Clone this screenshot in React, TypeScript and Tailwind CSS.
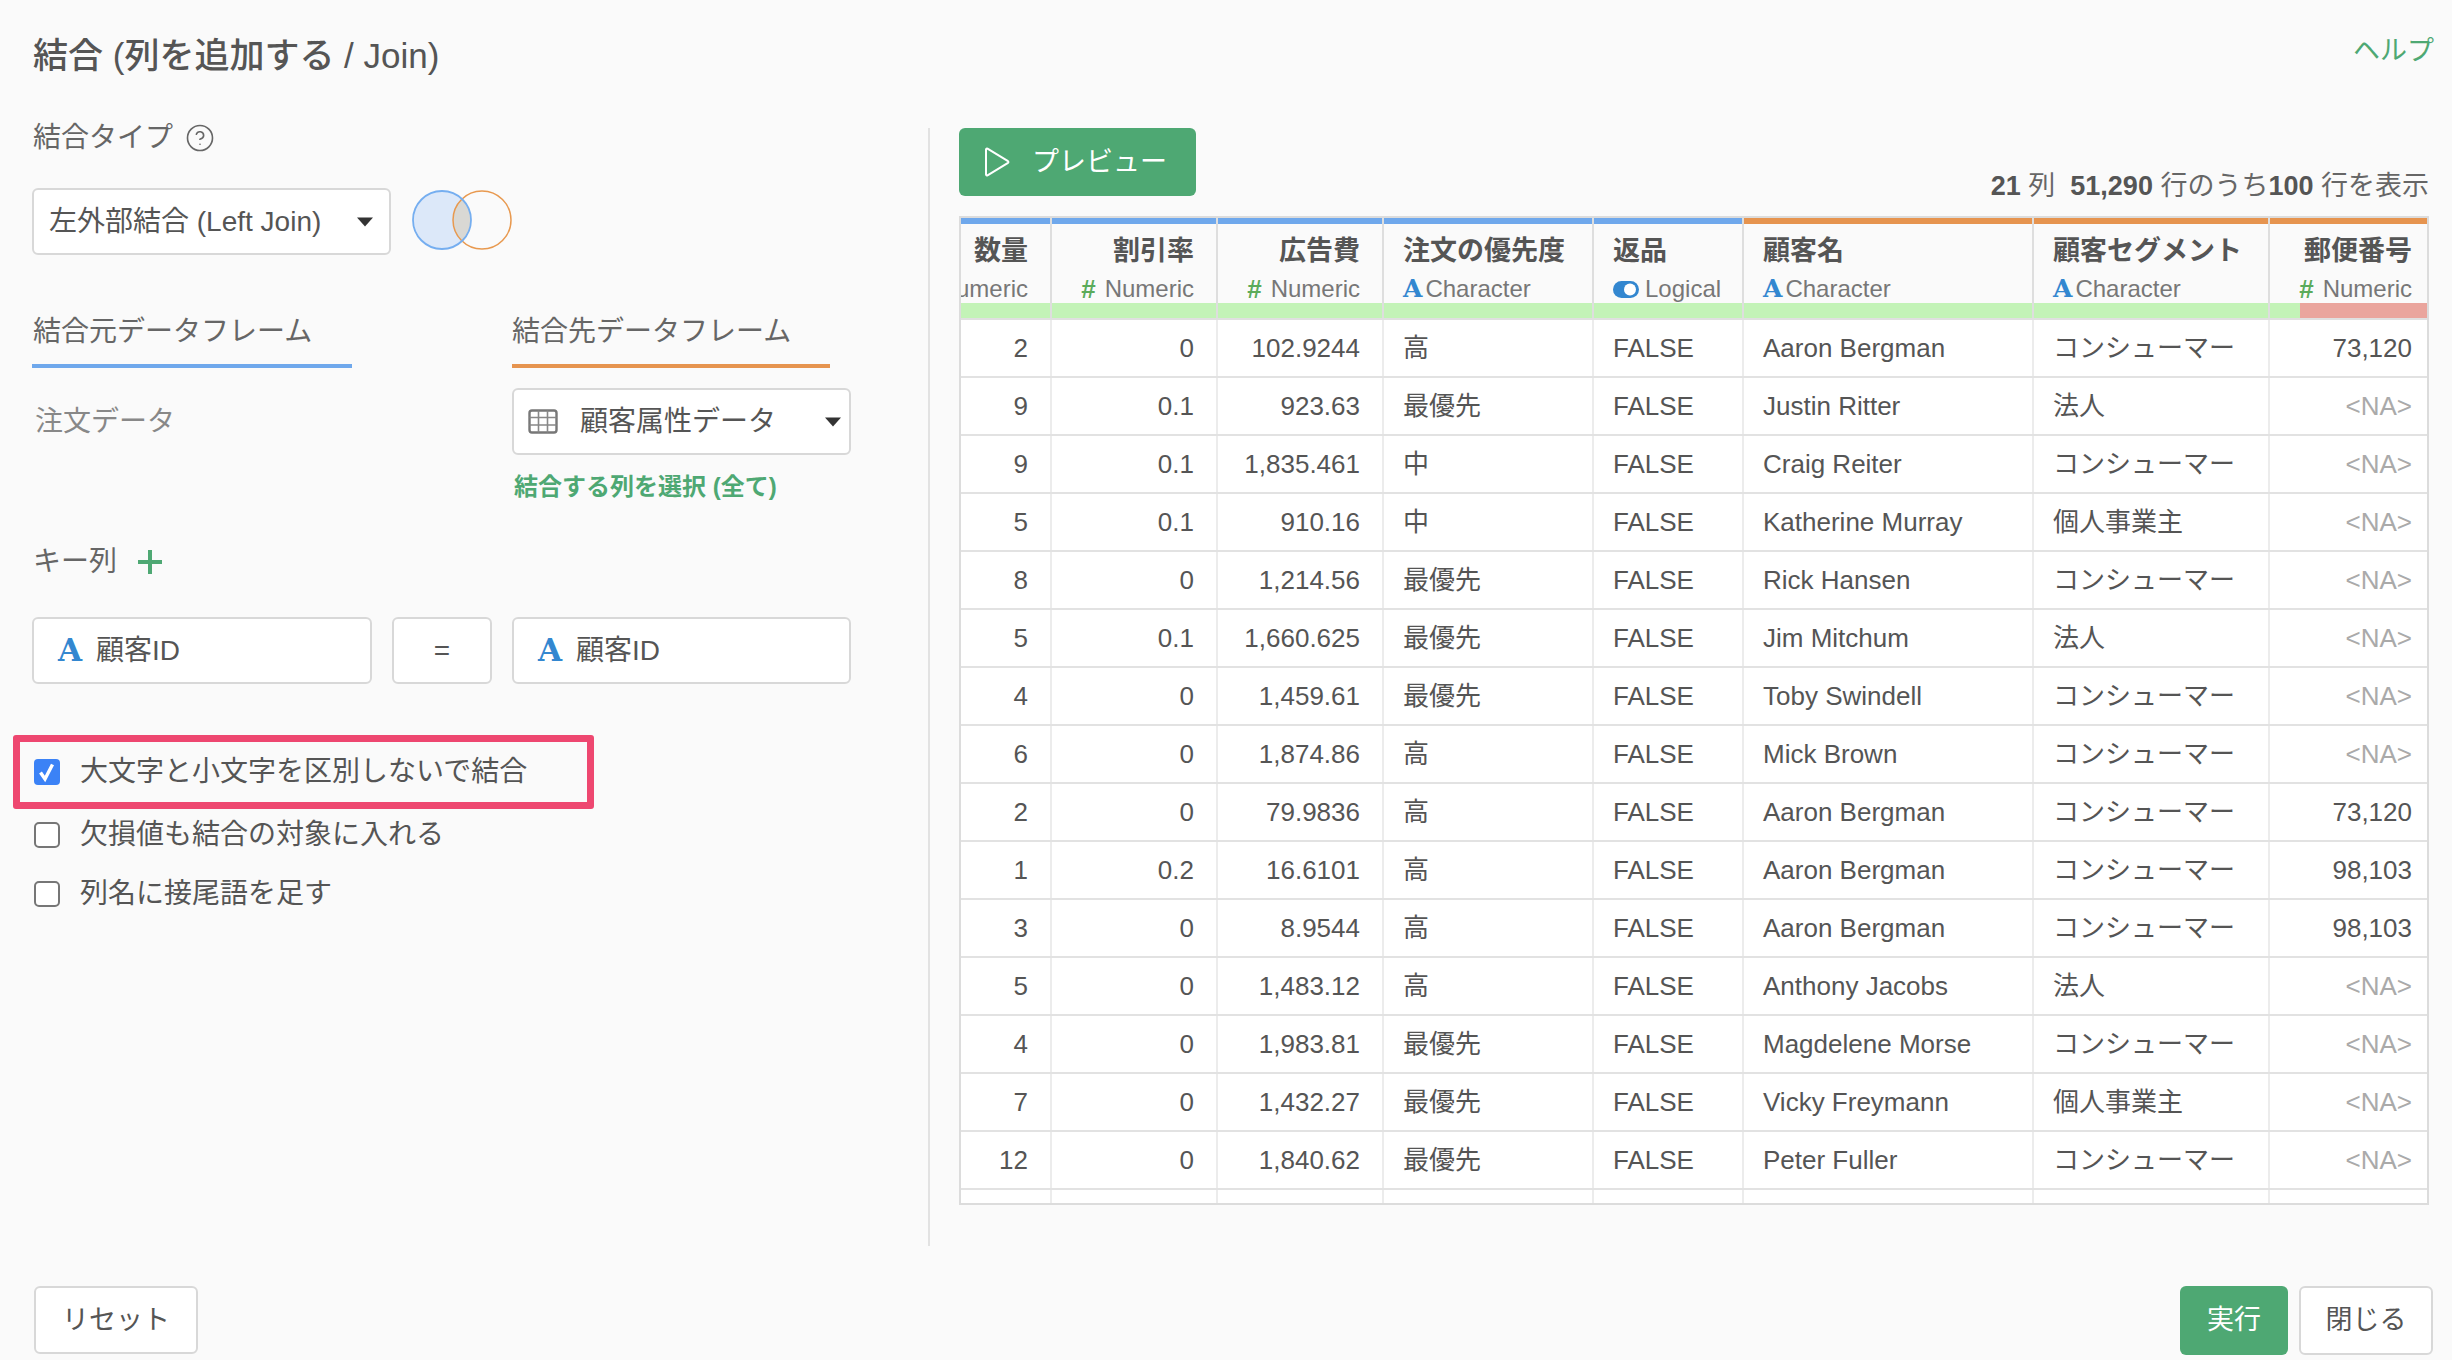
import { CircleHelp } from "lucide-react";

const columns = [
  { name: "数量", type: "num", right: true, top: "bg-[#6fa8ec]", w: "w-[91px]" },
  { name: "割引率", type: "num", right: true, top: "bg-[#6fa8ec]", w: "w-[166px]" },
  { name: "広告費", type: "num", right: true, top: "bg-[#6fa8ec]", w: "w-[166px]" },
  { name: "注文の優先度", type: "chr", right: false, top: "bg-[#6fa8ec]", w: "w-[210px]" },
  { name: "返品", type: "lgl", right: false, top: "bg-[#6fa8ec]", w: "w-[150px]" },
  { name: "顧客名", type: "chr", right: false, top: "bg-[#e6944f]", w: "w-[290px]" },
  { name: "顧客セグメント", type: "chr", right: false, top: "bg-[#e6944f]", w: "w-[236px]" },
  { name: "郵便番号", type: "num", right: true, top: "bg-[#e6944f]", w: "w-[157px]" },
];

const rows = [
  ["2", "0", "102.9244", "高", "FALSE", "Aaron Bergman", "コンシューマー", "73,120"],
  ["9", "0.1", "923.63", "最優先", "FALSE", "Justin Ritter", "法人", "<NA>"],
  ["9", "0.1", "1,835.461", "中", "FALSE", "Craig Reiter", "コンシューマー", "<NA>"],
  ["5", "0.1", "910.16", "中", "FALSE", "Katherine Murray", "個人事業主", "<NA>"],
  ["8", "0", "1,214.56", "最優先", "FALSE", "Rick Hansen", "コンシューマー", "<NA>"],
  ["5", "0.1", "1,660.625", "最優先", "FALSE", "Jim Mitchum", "法人", "<NA>"],
  ["4", "0", "1,459.61", "最優先", "FALSE", "Toby Swindell", "コンシューマー", "<NA>"],
  ["6", "0", "1,874.86", "高", "FALSE", "Mick Brown", "コンシューマー", "<NA>"],
  ["2", "0", "79.9836", "高", "FALSE", "Aaron Bergman", "コンシューマー", "73,120"],
  ["1", "0.2", "16.6101", "高", "FALSE", "Aaron Bergman", "コンシューマー", "98,103"],
  ["3", "0", "8.9544", "高", "FALSE", "Aaron Bergman", "コンシューマー", "98,103"],
  ["5", "0", "1,483.12", "高", "FALSE", "Anthony Jacobs", "法人", "<NA>"],
  ["4", "0", "1,983.81", "最優先", "FALSE", "Magdelene Morse", "コンシューマー", "<NA>"],
  ["7", "0", "1,432.27", "最優先", "FALSE", "Vicky Freymann", "個人事業主", "<NA>"],
  ["12", "0", "1,840.62", "最優先", "FALSE", "Peter Fuller", "コンシューマー", "<NA>"],
  ["1", "0", "1,120.5", "最優先", "FALSE", "Ben Peterman", "法人", "<NA>"],
];

function Caret() {
  return (
    <svg width="16" height="10" viewBox="0 0 16 10" className="shrink-0">
      <path d="M0 0.5h16l-8 9z" fill="#333" />
    </svg>
  );
}

function CharIcon({ className }: { className: string }) {
  return <span className={"shrink-0 [font-family:'DejaVu_Serif',serif] font-bold text-[#3387d0] " + className}>A</span>;
}

function TypeIcon({ type }: { type: string }) {
  if (type === "num") return <span className="shrink-0 font-bold text-[#5bab5b] text-[26px] mr-[9px]">#</span>;
  if (type === "chr") return <CharIcon className="text-[25px] mr-[3px]" />;
  return (
    <svg width="26" height="17" viewBox="0 0 26 17" className="shrink-0 mr-[6px]">
      <rect width="26" height="17" rx="8.5" fill="#3387d0" />
      <circle cx="17" cy="8.5" r="6" fill="#fff" />
    </svg>
  );
}

function Check({ checked, label }: { checked?: boolean; label: string }) {
  return (
    <label className="flex items-center gap-[20px] h-[40px] text-[28px] text-[#555] whitespace-nowrap">
      {checked ? (
        <span className="w-[26px] h-[26px] rounded-[4px] bg-[#3b82f6] flex items-center justify-center shrink-0">
          <svg width="20" height="22" viewBox="0 0 20 22">
            <path d="M3.5 11.5l4.5 6.5L15.5 3.5" fill="none" stroke="#fff" strokeWidth="3.4" />
          </svg>
        </span>
      ) : (
        <span className="w-[26px] h-[26px] rounded-[5px] border-2 border-[#767676] bg-white shrink-0" />
      )}
      {label}
    </label>
  );
}

function KeyBox({ className }: { className: string }) {
  return (
    <div className={"h-[67px] border-2 border-[#d8d8d8] rounded-[6px] bg-white flex items-center pl-[24px] text-[28px] text-[#555] " + className}>
      <CharIcon className="text-[31px] mr-[14px]" />
      顧客ID
    </div>
  );
}

export default function App() {
  return (
    <div className="w-[2452px] h-[1360px] overflow-hidden flex flex-col bg-[#fafafa] text-[#555] [font-family:'Liberation_Sans','Noto_Sans_CJK_JP',sans-serif]">
      {/* Header */}
      <div className="h-[118px] shrink-0 flex justify-between pl-[33px] pr-[18px]">
        <h1 className="text-[35px] leading-[48px] mt-[32px] font-medium text-[#555] whitespace-nowrap">結合 (列を追加する / Join)</h1>
        <a className="text-[27px] leading-[36px] mt-[33px] text-[#4ea873]">ヘルプ</a>
      </div>

      <div className="h-[1128px] shrink-0 flex">
        {/* Left panel */}
        <div className="w-[896px] ml-[32px] shrink-0">
          <div className="flex items-center h-[40px] text-[28px] text-[#666] pl-[1px] gap-[12px]">
            結合タイプ
            <CircleHelp size={30} strokeWidth={1.3} color="#666" />
          </div>

          <div className="mt-[30px] flex items-center gap-[21px]">
            <div className="w-[359px] h-[67px] border-2 border-[#d8d8d8] rounded-[6px] bg-white flex items-center justify-between pl-[15px] pr-[16px] text-[28px] text-[#555] whitespace-nowrap">
              左外部結合 (Left Join)
              <Caret />
            </div>
            <svg width="100" height="62" viewBox="0 0 100 62" className="-mt-[4px]">
              <defs>
                <clipPath id="venn-left">
                  <circle cx="30" cy="31" r="29" />
                </clipPath>
              </defs>
              <circle cx="30" cy="31" r="29" fill="#dce8f9" />
              <circle cx="70" cy="31" r="29" fill="#d9d8d4" clipPath="url(#venn-left)" />
              <circle cx="70" cy="31" r="29" fill="none" stroke="#e8994f" strokeWidth="1.5" />
              <circle cx="30" cy="31" r="29" fill="none" stroke="#75aef0" strokeWidth="1.8" />
            </svg>
          </div>

          <div className="mt-[57px] flex">
            <div className="w-[480px] shrink-0">
              <div className="w-[320px] h-[56px] border-b-4 border-[#6fa8ec] text-[28px] leading-[40px] text-[#666] pl-[1px] whitespace-nowrap">結合元データフレーム</div>
              <div className="mt-[34px] h-[40px] leading-[40px] text-[28px] text-[#888] pl-[3px]">注文データ</div>
            </div>
            <div>
              <div className="w-[318px] h-[56px] border-b-4 border-[#e6944f] text-[28px] leading-[40px] text-[#666] whitespace-nowrap">結合先データフレーム</div>
              <div className="mt-[20px] w-[339px] h-[67px] border-2 border-[#d8d8d8] rounded-[6px] bg-white flex items-center pl-[14px] pr-[8px] text-[28px] text-[#555]">
                <svg width="30" height="25" viewBox="0 0 30 25" className="shrink-0 mr-[22px]">
                  <rect x="1.5" y="1.5" width="27" height="22" rx="2.5" fill="none" stroke="#777" strokeWidth="2.4" />
                  <path d="M1.5 8.5h27M1.5 16h27M10.5 1.5v22M19.5 1.5v22" stroke="#888" strokeWidth="1.6" />
                </svg>
                顧客属性データ
                <span className="ml-auto"><Caret /></span>
              </div>
              <div className="mt-[16px] h-[32px] leading-[32px] text-[24px] font-bold text-[#4ea873] pl-[2px] whitespace-nowrap">結合する列を選択 (全て)</div>
            </div>
          </div>

          <div className="mt-[39px] h-[40px] flex items-center text-[28px] text-[#666] pl-[1px] gap-[21px]">
            キー列
            <svg width="24" height="24" viewBox="0 0 24 24">
              <path d="M12 0v24M0 12h24" stroke="#4ea873" strokeWidth="4" />
            </svg>
          </div>

          <div className="mt-[35px] flex gap-[20px]">
            <KeyBox className="w-[340px]" />
            <div className="w-[100px] h-[67px] border-2 border-[#d8d8d8] rounded-[6px] bg-white flex items-center justify-center text-[28px] text-[#555]">=</div>
            <KeyBox className="w-[339px]" />
          </div>

          <div className="mt-[51px] -ml-[19px] w-[581px] h-[74px] border-[7px] border-[#ee4770] rounded-[3px] flex items-center pl-[14px]">
            <Check checked label="大文字と小文字を区別しないで結合" />
          </div>
          <div className="mt-[6px] pl-[2px]">
            <Check label="欠損値も結合の対象に入れる" />
          </div>
          <div className="mt-[19px] pl-[2px]">
            <Check label="列名に接尾語を足す" />
          </div>
        </div>

        {/* Right panel */}
        <div className="flex-1 min-w-0 mt-[10px] border-l-2 border-[#e2e2e2] pl-[29px]">
          <div className="flex justify-between items-end h-[88px] pr-[23px]">
            <button className="w-[237px] h-[68px] mb-[20px] -mt-[1px] rounded-[6px] bg-[#4ea873] text-white text-[27px] flex items-center pl-[25px] gap-[22px]">
              <svg width="26" height="30" viewBox="0 0 26 30">
                <path d="M2 2.5v25a1 1 0 0 0 1.5 .8L24 15.8a1 1 0 0 0 0-1.6L3.5 1.7A1 1 0 0 0 2 2.5z" fill="none" stroke="#fff" strokeWidth="2" />
              </svg>
              プレビュー
            </button>
            <div className="text-[27px] leading-[36px] -mb-[0px] whitespace-nowrap text-[#666] translate-y-[-12px]">
              <b className="text-[#555]">21</b> 列&nbsp; <b className="text-[#555]">51,290</b> 行のうち<b className="text-[#555]">100</b> 行を表示
            </div>
          </div>

          {/* Table */}
          <div className="w-[1470px] h-[989px] border-2 border-[#dcdcdc] overflow-hidden">
            <div className="flex border-b-2 border-[#e0e0e0] h-[100px] box-content">
              {columns.map((col, i) => (
                <div key={col.name} className={col.w + " shrink-0 flex flex-col " + (i < 7 ? "border-r-2 border-[#dedede]" : "")}>
                  <div className={"h-[6px] shrink-0 " + col.top} />
                  <div
                    className={
                      "mt-[9px] h-[36px] leading-[36px] text-[27px] font-bold text-[#555] whitespace-nowrap flex overflow-hidden " +
                      (col.right ? "justify-end " + (i === 7 ? "pr-[15px]" : "pr-[22px]") : "pl-[19px]")
                    }
                  >
                    {col.name}
                  </div>
                  <div
                    className={
                      "mt-[6px] h-[28px] leading-[28px] text-[24px] text-[#777] whitespace-nowrap flex items-center overflow-hidden " +
                      (col.right ? "justify-end " + (i === 7 ? "pr-[15px]" : "pr-[22px]") : "pl-[19px]")
                    }
                  >
                    <TypeIcon type={col.type} />
                    <span className="shrink-0">{col.type === "num" ? "Numeric" : col.type === "chr" ? "Character" : "Logical"}</span>
                  </div>
                  <div className="h-[15px] shrink-0 flex bg-[#c3f3b7]">
                    {i === 7 && <div className="ml-auto w-[127px] bg-[#eaa59d]" />}
                  </div>
                </div>
              ))}
            </div>
            {rows.map((row, r) => (
              <div key={r} className="flex h-[58px] shrink-0 bg-white border-b-2 border-[#e2e2e2]">
                {row.map((cell, c) => (
                  <div
                    key={c}
                    className={
                      columns[c].w +
                      " shrink-0 flex items-center text-[26px] whitespace-nowrap overflow-hidden " +
                      (c < 7 ? "border-r-2 border-[#ececec] " : "") +
                      (columns[c].right ? "justify-end " + (c === 7 ? "pr-[15px] " : "pr-[22px] ") : "pl-[19px] ") +
                      (cell === "<NA>" ? "text-[#aaa]" : "text-[#555]")
                    }
                  >
                    {cell}
                  </div>
                ))}
              </div>
            ))}
          </div>
        </div>
      </div>

      {/* Footer */}
      <div className="flex-1 flex justify-between items-start pt-[40px] pl-[34px] pr-[19px]">
        <button className="w-[164px] h-[68px] border-2 border-[#d8d8d8] rounded-[6px] bg-white text-[27px] text-[#555]">リセット</button>
        <div className="flex gap-[11px]">
          <button className="w-[108px] h-[69px] rounded-[6px] bg-[#4ea873] text-white text-[27px]">実行</button>
          <button className="w-[134px] h-[69px] border-2 border-[#d8d8d8] rounded-[6px] bg-white text-[27px] text-[#555]">閉じる</button>
        </div>
      </div>
    </div>
  );
}
